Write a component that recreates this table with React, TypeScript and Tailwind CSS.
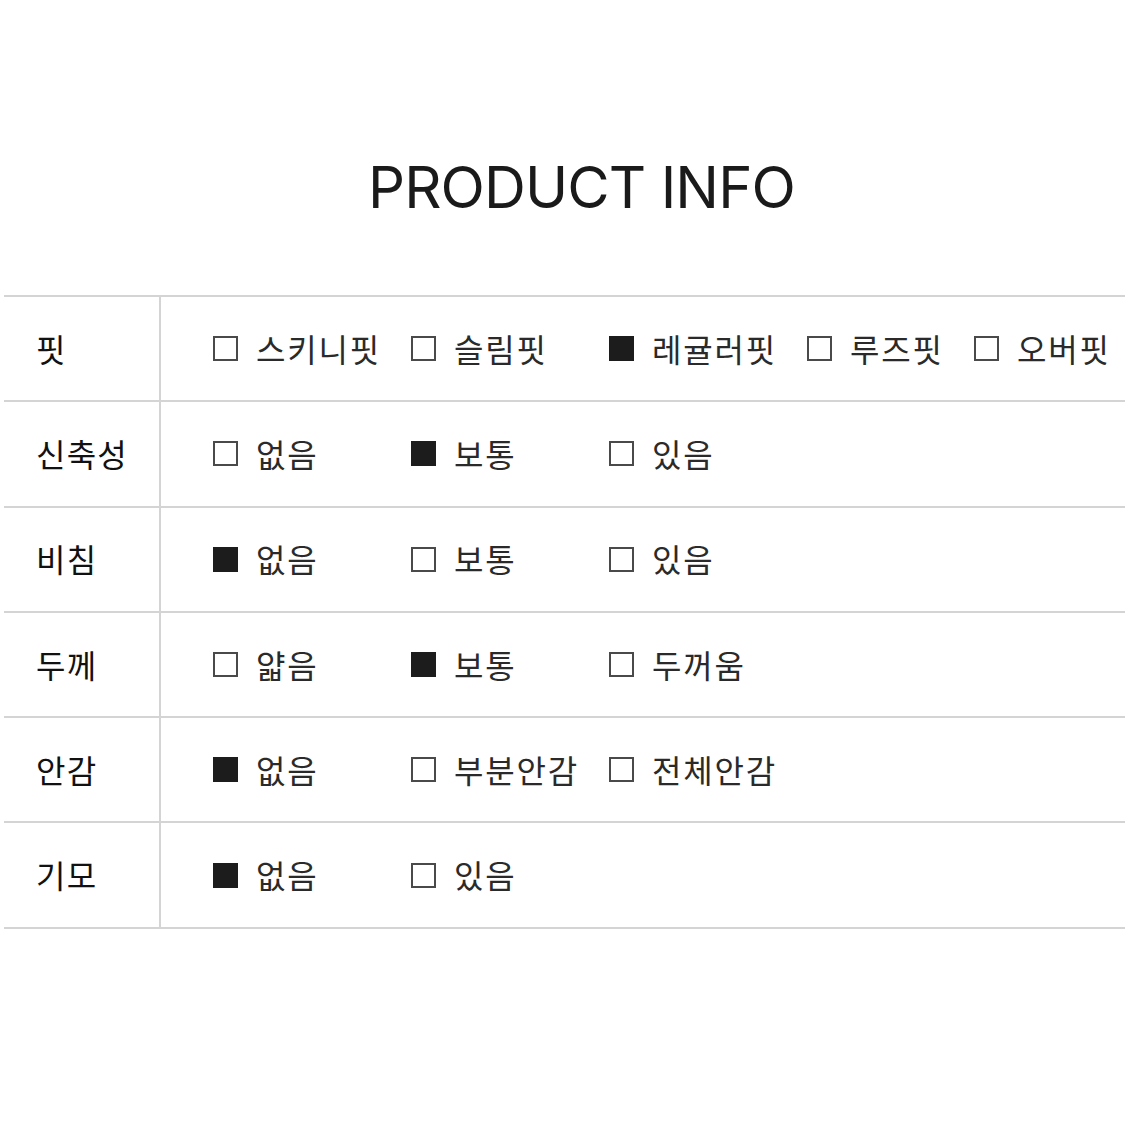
import React from 'react';

type Opt = { label: string; on: boolean };

interface InfoRow {
  title: string;
  options: Opt[];
}

const rows: InfoRow[] = [
  {
    title: '핏',
    options: [
      { label: '스키니핏', on: false },
      { label: '슬림핏', on: false },
      { label: '레귤러핏', on: true },
      { label: '루즈핏', on: false },
      { label: '오버핏', on: false },
    ],
  },
  {
    title: '신축성',
    options: [
      { label: '없음', on: false },
      { label: '보통', on: true },
      { label: '있음', on: false },
    ],
  },
  {
    title: '비침',
    options: [
      { label: '없음', on: true },
      { label: '보통', on: false },
      { label: '있음', on: false },
    ],
  },
  {
    title: '두께',
    options: [
      { label: '얇음', on: false },
      { label: '보통', on: true },
      { label: '두꺼움', on: false },
    ],
  },
  {
    title: '안감',
    options: [
      { label: '없음', on: true },
      { label: '부분안감', on: false },
      { label: '전체안감', on: false },
    ],
  },
  {
    title: '기모',
    options: [
      { label: '없음', on: true },
      { label: '있음', on: false },
    ],
  },
];

// widths of each option slot, the 4th one is narrower in the original
const slotWidths = ['w-[198px]', 'w-[198px]', 'w-[198px]', 'w-[167px]', 'w-auto'];

const Check: React.FC<{ on: boolean }> = ({ on }) =>
  on ? (
    <span className="block w-[25px] h-[25px] bg-[#1c1c1c] shrink-0" />
  ) : (
    <span className="block w-[25px] h-[25px] border-2 border-[#4a4a4a] shrink-0" />
  );

const App: React.FC = () => {
  return (
    <div
      className="w-[1125px] h-[1125px] bg-white text-[#2a2a2a] overflow-hidden"
      style={{ fontFamily: '"Noto Sans CJK KR", "Noto Sans", sans-serif' }}
    >
      <div className="pt-[152px] pl-[38px] text-center">
        <h1
          className="text-[58px] leading-[70px] font-normal text-[#1a1a1a] tracking-[-0.9px]"
          style={{ fontFamily: 'Inter, "Noto Sans", sans-serif' }}
        >
          PRODUCT INFO
        </h1>
      </div>

      <div className="mt-[73px] ml-[4px] border-t-2 border-[#d4d4d4]">
        {rows.map((row) => (
          <div key={row.title} className="flex h-[105.3px] border-b-2 border-[#d4d4d4]">
            <div className="w-[157px] border-r-2 border-[#d4d4d4] flex items-center pl-[32px] pb-[2px] text-[32px] leading-none font-normal text-[#111] tracking-[1.2px]">
              {row.title}
            </div>
            <div className="flex items-center pl-[52px]">
              {row.options.map((opt, i) => (
                <div key={opt.label} className={`${slotWidths[i]} flex items-center gap-[18px] shrink-0`}>
                  <Check on={opt.on} />
                  <span className="text-[32px] leading-none tracking-[1.8px] whitespace-nowrap pb-[2px]">{opt.label}</span>
                </div>
              ))}
            </div>
          </div>
        ))}
      </div>
    </div>
  );
};

export default App;
